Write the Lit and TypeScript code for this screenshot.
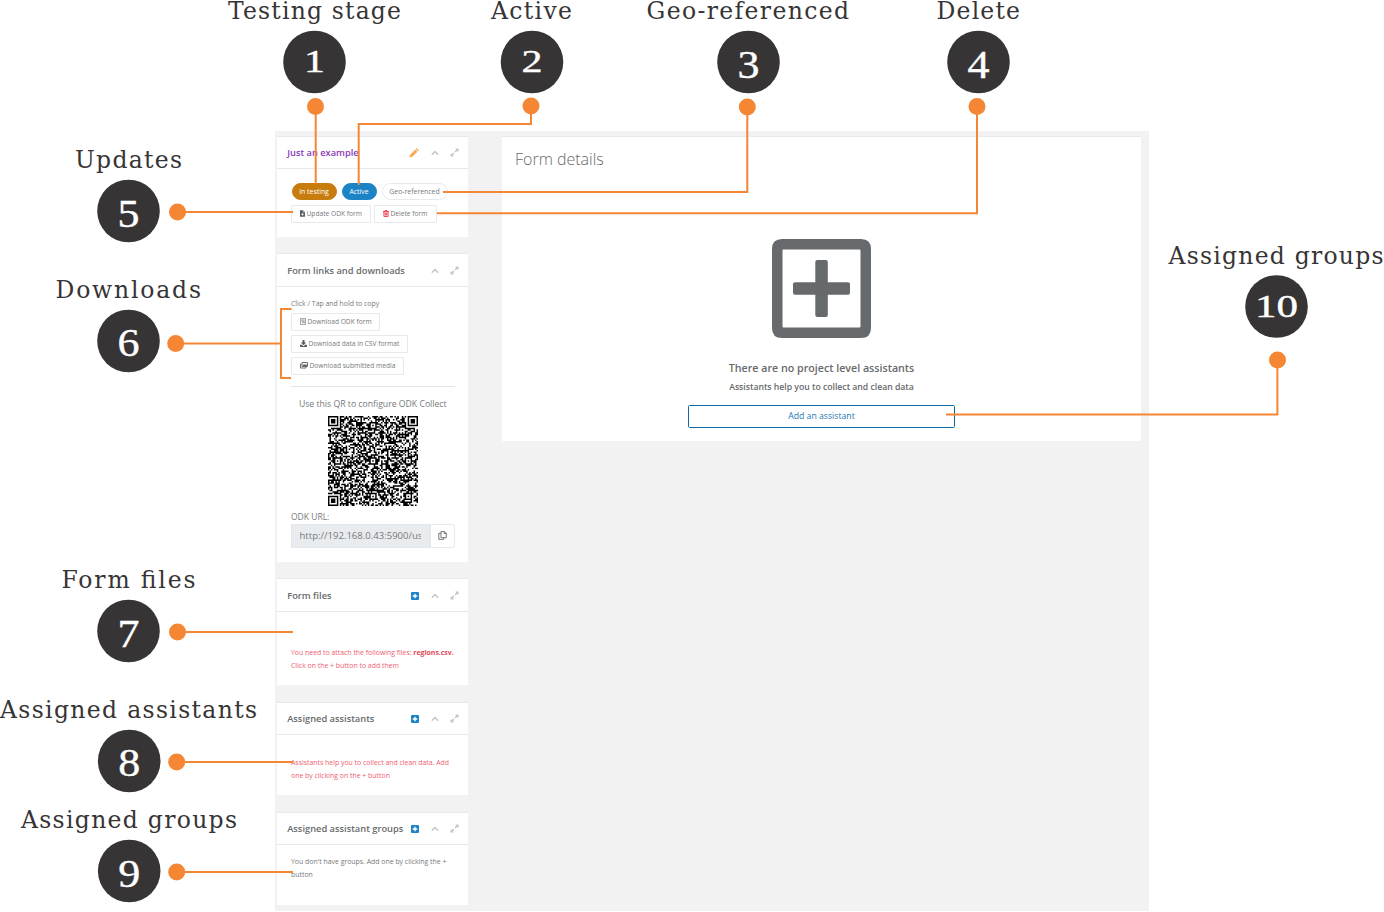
import { LitElement, html, css, svg, nothing } from "lit";
import { customElement, property } from "lit/decorators.js";

const ORANGE = "#f58634";

const icons = {
  pencil: svg`<svg viewBox="0 0 16 16" width="10" height="10"><path fill="#f8ac59" d="M1 15l1-4.500L10 2.500l3.500 3.500L5.500 14zM10.800 1.700l1-1q.8-.6 1.600 0l1.900 1.900q.6.8 0 1.600l-1 1z"/></svg>`,
  up: svg`<svg viewBox="0 0 8 6" width="8" height="6"><path fill="none" stroke="#c4c4c4" stroke-width="1.400" d="M.8 4.800L4 1.600l3.200 3.200"/></svg>`,
  expand: svg`<svg viewBox="0 0 9 9" width="9" height="9"><path fill="#c4c4c4" d="M5.200.6h3.300v3.300L7.400 2.800 5.700 4.500 4.600 3.400 6.300 1.700zM.5 5.200l1.100 1.100 1.700-1.700 1.100 1.100-1.700 1.700 1.100 1.100H.5z"/></svg>`,
  plus: svg`<svg viewBox="0 0 8 8" width="8" height="8"><rect width="8" height="8" rx="1" fill="#1c84c6"/><path stroke="#fff" stroke-width="1.300" d="M4 1.700v4.600M1.700 4h4.600"/></svg>`,
  file: svg`<svg viewBox="0 0 6 8" width="5" height="7"><path fill="#5a5f63" d="M0 0h3.500v2.500H6V8H0zM4 0l2 2H4z"/><path stroke="#fff" stroke-width=".9" d="M3 3.500v3M1.500 5h3"/></svg>`,
  trash: svg`<svg viewBox="0 0 12 14" width="6" height="7"><path fill="none" stroke="#ed4555" stroke-width="1.900" d="M0 3h12M4 3V1h4v2M1.800 3v10h8.400V3M4.300 5v6M6 5v6M7.700 5v6"/></svg>`,
  form: svg`<svg viewBox="0 0 6 7" width="6" height="7"><path fill="none" stroke="#85898c" stroke-width=".8" d="M.4.4h5.200v6.200H.4zM1.300 2h3.400M1.300 3.300h3.400M2 4.700h3.500"/></svg>`,
  download: svg`<svg viewBox="0 0 14 14" width="7" height="7"><path fill="#5a5f63" d="M5 0h4v5h3.500L7 10.500 1.500 5H5zM0 9.500h3.500L7 12.500l3.500-3H14V14H0z"/></svg>`,
  media: svg`<svg viewBox="0 0 16 14" width="8" height="7"><path fill="none" stroke="#5a5f63" stroke-width="1.800" d="M4 1h11v8H4zM3 4H1v8h11v-2"/><path fill="#5a5f63" d="M5 8l3-4 2 2 2-2 2 3v1z"/></svg>`,
  copy: svg`<svg viewBox="0 0 9 9" width="9" height="9"><path fill="none" stroke="#676a6c" stroke-width=".9" d="M3 .6h3.500L8.300 2.400v4.300H3zM6.200.6v2h2M3 2.300H.8v6.100h4.900V6.800"/></svg>`,
};

/** Renders a 61-module matrix code with finder and alignment patterns. */
@customElement("matrix-code")
class MatrixCode extends LitElement {
  static styles = css`:host { display: block; } svg { display: block; }`;
  private build(): string {
    const n = 61;
    let seed = 20231;
    const rnd = () => {
      seed = (seed * 1103515245 + 12345) % 2147483648;
      return seed / 2147483648;
    };
    const finder = (x: number, y: number): boolean | null => {
      for (const [fx, fy] of [[0, 0], [n - 7, 0], [0, n - 7]]) {
        const dx = Math.abs(x - fx - 3), dy = Math.abs(y - fy - 3);
        const d = Math.max(dx, dy);
        if (d <= 4) return d !== 2 && d !== 4;
      }
      for (const ax of [6, 30, 54]) for (const ay of [6, 30, 54]) {
        const d = Math.max(Math.abs(x - ax), Math.abs(y - ay));
        if (d <= 2) return d !== 1;
      }
      return null;
    };
    let d = "";
    for (let y = 0; y < n; y++) for (let x = 0; x < n; x++) {
      const r = rnd() < 0.54;
      const f = finder(x, y);
      if (f === null ? r : f) d += `M${x} ${y}h1v1h-1z`;
    }
    return d;
  }
  render() {
    return html`<svg viewBox="0 0 61 61" width="90" height="90"><path d=${this.build()} /></svg>`;
  }
}

@customElement("side-card")
class SideCard extends LitElement {
  @property() heading = "";
  @property() action = "";
  static styles = css`
    :host { display: flex; flex-direction: column; box-sizing: border-box; background: #fff; border-top: 1px solid #e7eaec; }
    .head { display: flex; align-items: center; height: 31px; border-bottom: 1px solid #e7eaec; padding: var(--head-shift, 0px) 9px 0 10.200px; }
    .title { flex: 1; min-width: 0; font-size: 9.300px; font-weight: 600; color: #676a6c; white-space: nowrap; }
    .purple { color: #8a3ab9; }
    .tools { display: flex; align-items: center; flex: none; margin-left: -10px; }
    .tools span { display: flex; width: 20px; justify-content: flex-end; }
    svg { display: block; flex: none; }
    .body { flex: 1; padding: 0 13.500px 0 14px; }
  `;
  render() {
    const act = this.action === "edit" ? icons.pencil : this.action === "add" ? icons.plus : nothing;
    return html`<div class="head">
        <div class="title ${this.action === "edit" ? "purple" : ""}">${this.heading}</div>
        <div class="tools"><span>${act}</span><span>${icons.up}</span><span>${icons.expand}</span></div>
      </div>
      <div class="body"><slot></slot></div>`;
  }
}

type Callout = {
  n: string; label: string; lx: number; lw: number; ly: number;
  cx: number; cy: number; dot: [number, number]; line: string;
};

const callouts: Callout[] = [
  { n: "1", label: "Testing stage", lx: 228, lw: 173, ly: 18.5, cx: 314.5, cy: 62, dot: [315.5, 106.5], line: "M315.700 106V184" },
  { n: "2", label: "Active", lx: 491, lw: 81, ly: 18.5, cx: 532, cy: 62, dot: [531, 106], line: "M531 106V124H358.700V185" },
  { n: "3", label: "Geo-referenced", lx: 646.5, lw: 202.5, ly: 18.5, cx: 748.5, cy: 62, dot: [747.3, 107], line: "M747.300 107V192H443" },
  { n: "4", label: "Delete", lx: 936.5, lw: 83.5, ly: 18.5, cx: 978.5, cy: 62, dot: [977, 106.5], line: "M977 106V213.200H437" },
  { n: "5", label: "Updates", lx: 75, lw: 107, ly: 167.5, cx: 128.5, cy: 211, dot: [177.5, 212], line: "M177 212H293" },
  { n: "6", label: "Downloads", lx: 55.5, lw: 145.5, ly: 297.5, cx: 128.5, cy: 341, dot: [175.7, 343.5], line: "M176 343.500H281M291.500 309H281V378H291" },
  { n: "7", label: "Form files", lx: 61.5, lw: 134, ly: 587.5, cx: 128.5, cy: 631, dot: [177.5, 632], line: "M177 632H293" },
  { n: "8", label: "Assigned assistants", lx: 0, lw: 257, ly: 717.5, cx: 129.2, cy: 761, dot: [176.7, 762], line: "M177 762H293" },
  { n: "9", label: "Assigned groups", lx: 21, lw: 216, ly: 827.5, cx: 129.2, cy: 871, dot: [176.7, 872], line: "M177 872H293" },
  { n: "10", label: "Assigned groups", lx: 1168.5, lw: 215, ly: 263.5, cx: 1276.5, cy: 306.5, dot: [1277.5, 360], line: "M1277.400 360V414.500H946" },
];

/* Old-style figures: 0-2 sit at x-height, 3-5, 7 and 9 descend, 6 and 8 ascend. */
const figure = (n: string) => {
  if (n === "10") return { size: 31, w: 43, dy: 10 };
  if (n === "1" || n === "2") return { size: 31, w: 21, dy: 10 };
  return { size: 40, w: 22, dy: n === "6" || n === "8" ? 14.5 : 15.5 };
};

@customElement("app-root")
class AppRoot extends LitElement {
  static styles = css`
    :host { display: block; position: relative; width: 1384px; height: 912px; overflow: hidden; background: #fff; font-family: "Open Sans", sans-serif; color: #76797c; }
    .page { display: flex; box-sizing: border-box; width: 874px; height: 780px; background: #f2f2f2; padding: 5px 8px 0 2px; margin-left: 275px; }
    .frame { padding-top: 131px; }
    .side { width: 191px; display: flex; flex-direction: column; margin-right: 34px; }
    .c1 { height: 101px; margin-bottom: 16px; }
    .c2 { height: 309px; margin-bottom: 16px; --head-shift: 1px; }
    .c3 { height: 107px; margin-bottom: 17px; --head-shift: 1px; }
    .c4 { height: 93px; margin-bottom: 17px; }
    .c5 { height: 93px; }
    svg { display: block; flex: none; }
    .pills { display: flex; gap: 5px; margin: 14px 0 0 .5px; }
    .pill { box-sizing: border-box; height: 17px; line-height: 15px; border-radius: 9px; border: 1px solid #e7eaec; font-size: 6.900px; text-align: center; white-space: nowrap; }
    .testing { width: 45px; background: #c77c0e; border-color: #c77c0e; color: #fff; }
    .active { width: 35px; background: #1c84c6; border-color: #1c84c6; color: #fff; }
    .geo { width: 66px; }
    .row { display: flex; gap: 3px; margin-top: 5px; }
    .btn { box-sizing: border-box; display: flex; align-items: center; gap: 1.500px; height: 18px; padding: 0 0 1px 8px; border: 1px solid #e7eaec; border-radius: 1px; font-size: 6.650px; white-space: nowrap; background: #fff; }
    .w80 { width: 80px; } .w63 { width: 63px; } .w89 { width: 89px; } .w117 { width: 117px; } .w113 { width: 113px; }
    .hint { font-size: 6.900px; line-height: 10px; margin-top: 12px; }
    .stack { display: flex; flex-direction: column; gap: 4px; margin-top: 4px; }
    .rule { height: 1px; background: #e2e4e5; margin-top: 11px; }
    .qrtext { font-size: 8.680px; line-height: 14px; margin-top: 10px; text-align: center; white-space: nowrap; }
    .qr { display: flex; justify-content: center; margin-top: 5px; }
    .urllabel { font-size: 8.500px; line-height: 12px; margin-top: 5px; }
    .url { display: flex; height: 24px; margin-top: 1px; }
    .field { box-sizing: border-box; width: 139px; background: #e9ecef; border: 1px solid #e5e6e7; padding: 0 8px 0 7.500px; font-size: 9.550px; line-height: 21px; }
    .clip { overflow: hidden; white-space: nowrap; }
    .copy { box-sizing: border-box; flex: 1; display: flex; align-items: center; justify-content: center; border: 1px solid #e7eaec; border-radius: 0 2px 2px 0; padding-bottom: 2px; }
    .note { font-size: 6.920px; line-height: 13px; white-space: nowrap; }
    .red { color: #ed6070; }
    .red b { color: #e2485c; }
    .n3 { margin-top: 34px; } .n4 { margin-top: 21px; } .n5 { margin-top: 10px; }
    .main { width: 639px; height: 305px; box-sizing: border-box; background: #fff; border-top: 1px solid #e7eaec; display: flex; flex-direction: column; align-items: center; }
    .main h1 { align-self: flex-start; margin: 11px 0 0 13px; font-size: 16px; line-height: 22px; font-weight: 300; color: #676a6c; }
    .big { margin-top: 69px; }
    .none { margin-top: 22px; font-size: 10.680px; line-height: 16px; font-weight: 600; color: #676a6c; }
    .help { margin-top: 5px; font-size: 8.670px; line-height: 12px; font-weight: 600; color: #676a6c; white-space: nowrap; }
    .add { box-sizing: border-box; width: 267px; height: 23px; margin-top: 12px; border: 1px solid #0a6ba3; border-radius: 1.500px; color: #1c78b4; font-size: 8.700px; line-height: 20px; text-align: center; }
    .notes { position: absolute; left: 0; top: 0; }
    .label { font: 23.500px "DejaVu Serif", serif; fill: #373435; }
    .fig { font-family: "Liberation Serif", serif; fill: #fff; stroke: #fff; stroke-width: .4px; }
  `;
  render() {
    return html`<div class="frame"><div class="page">
      <div class="side">
        <side-card class="c1" heading="Just an example" action="edit">
          <div class="pills"><div class="pill testing">In testing</div><div class="pill active">Active</div><div class="pill geo">Geo-referenced</div></div>
          <div class="row"><div class="btn w80">${icons.file}Update ODK form</div><div class="btn w63">${icons.trash}Delete form</div></div>
        </side-card>
        <side-card class="c2" heading="Form links and downloads">
          <div class="hint">Click / Tap and hold to copy</div>
          <div class="stack">
            <div class="btn w89">${icons.form}Download ODK form</div>
            <div class="btn w117">${icons.download}Download data in CSV format</div>
            <div class="btn w113">${icons.media}Download submitted media</div>
          </div>
          <div class="rule"></div>
          <div class="qrtext">Use this QR to configure ODK Collect</div>
          <div class="qr"><matrix-code></matrix-code></div>
          <div class="urllabel">ODK URL:</div>
          <div class="url"><div class="field"><div class="clip">http://192.168.0.43:5900/user</div></div><div class="copy">${icons.copy}</div></div>
        </side-card>
        <side-card class="c3" heading="Form files" action="add">
          <div class="note red n3">You need to attach the following files: <b>regions.csv.</b><br>Click on the + button to add them</div>
        </side-card>
        <side-card class="c4" heading="Assigned assistants" action="add">
          <div class="note red n4">Assistants help you to collect and clean data. Add<br>one by clicking on the + button</div>
        </side-card>
        <side-card class="c5" heading="Assigned assistant groups" action="add">
          <div class="note n5">You don't have groups. Add one by clicking the +<br>button</div>
        </side-card>
      </div>
      <div class="main">
        <h1>Form details</h1>
        <svg class="big" viewBox="0 0 99 99" width="99" height="99"><path fill="#676a6c" fill-rule="evenodd" d="M10 0H89Q99 0 99 10V89Q99 99 89 99H10Q0 99 0 89V10Q0 0 10 0zM11 10.500Q10.500 10.500 10.500 11.500V87.500Q10.500 88.500 11.500 88.500H87.500Q88.500 88.500 88.500 87.500V11.500Q88.500 10.500 87.500 10.500z"/><rect x="43.300" y="21" width="12.500" height="57" rx="2" fill="#676a6c"/><rect x="21" y="43.300" width="57" height="12.500" rx="2" fill="#676a6c"/></svg>
        <div class="none">There are no project level assistants</div>
        <div class="help">Assistants help you to collect and clean data</div>
        <div class="add">Add an assistant</div>
      </div>
    </div></div>
    <svg class="notes" width="1384" height="912" viewBox="0 0 1384 912">
      ${callouts.map((c) => {
        const f = figure(c.n);
        return svg`
          <path d=${c.line} fill="none" stroke=${ORANGE} stroke-width="2"/>
          <circle cx=${c.dot[0]} cy=${c.dot[1]} r="8.500" fill=${ORANGE}/>
          <circle cx=${c.cx} cy=${c.cy} r="31.300" fill="#373435"/>
          <text class="fig" x=${c.cx - f.w / 2} y=${c.cy + f.dy} font-size=${f.size} textLength=${f.w} lengthAdjust="spacingAndGlyphs">${c.n}</text>
          <text class="label" x=${c.lx} y=${c.ly} textLength=${c.lw}>${c.label}</text>`;
      })}
    </svg>`;
  }
}
